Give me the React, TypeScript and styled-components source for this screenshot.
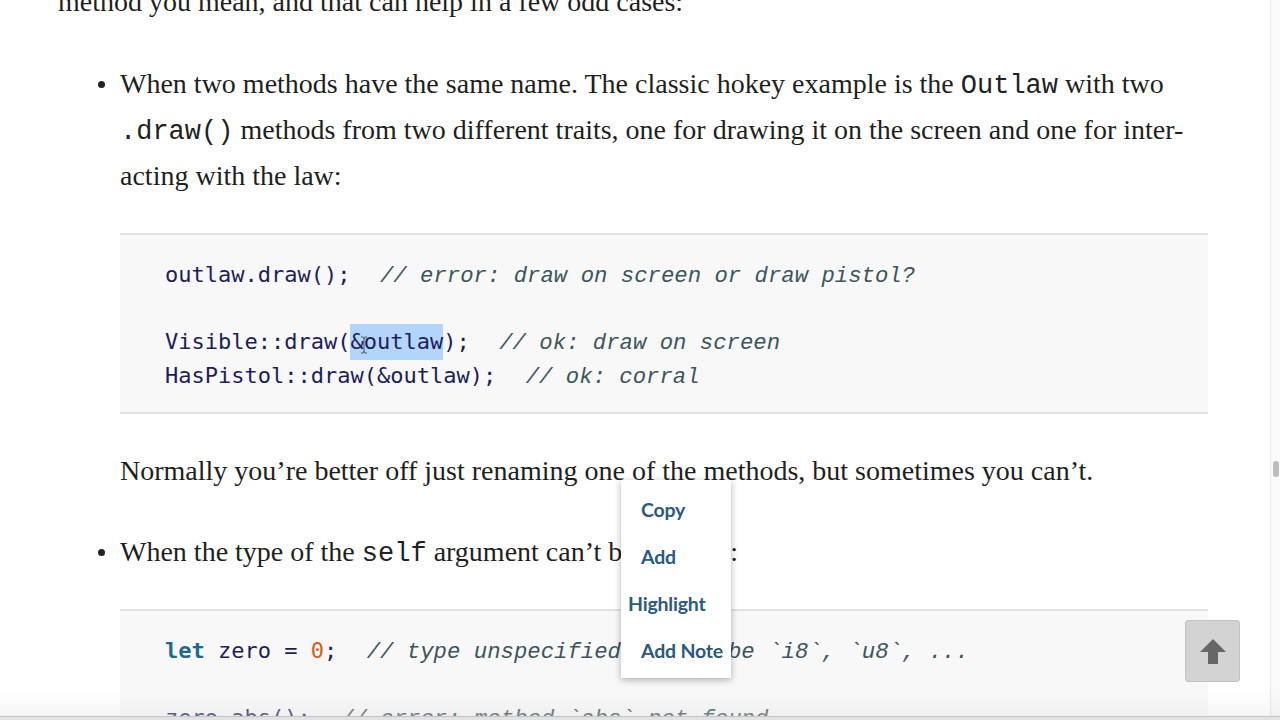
import React from "react";
import styled, { createGlobalStyle } from "styled-components";

const Global = createGlobalStyle`
  html, body { margin: 0; padding: 0; background: #ffffff; overflow: hidden; }
  body { width: 1280px; height: 720px; }
`;

const Page = styled.div`
  position: relative;
  width: 1280px;
  height: 720px;
  overflow: hidden;
  background: #fff;
`;

const Article = styled.div`
  display: flex;
  flex-direction: column;
  gap: 36px;
  width: 1150px;
  padding-left: 58px;
  margin-top: -21px;
  font-family: "Liberation Serif", "Times New Roman", serif;
  font-size: 28px;
  line-height: 46px;
  color: #1f1f1f;
`;

const Para = styled.p`
  margin: 0;
  white-space: nowrap;
`;

const List = styled.ul`
  margin: 0;
  padding: 0;
  list-style: none;
  display: flex;
  flex-direction: column;
  gap: 35px;
`;

const Item = styled.li`
  display: grid;
  grid-template-columns: 62px 1fr;
`;

const BulletCell = styled.div`
  height: 46px;
  display: flex;
  align-items: center;
  justify-content: flex-end;
  padding-right: 15px;
`;

const Dot = styled.span`
  width: 7px;
  height: 7px;
  border-radius: 50%;
  background: #222;
`;

const ItemBody = styled.div`
  display: flex;
  flex-direction: column;
  gap: 34px;
`;

const Code = styled.code`
  font-family: "Liberation Mono", monospace;
  font-size: 27px;
  line-height: 1;
  color: #222;
`;

const CodeBlock = styled.div`
  padding: 23px 45px 20px;
  background: #f8f8f8;
  border-top: 2px solid #e3e3e3;
  border-bottom: 2px solid #e3e3e3;
  display: flex;
  flex-direction: column;
  overflow: hidden;
`;

const CodeLine = styled.div`
  height: 33.5px;
  line-height: 33.5px;
  white-space: pre;
  font-family: "DejaVu Sans Mono", monospace;
  font-size: 22px;
  color: #1d1d5e;
`;

const Comment = styled.span`
  font-family: "Liberation Mono", monospace;
  font-style: italic;
  font-size: 22.3px;
  color: #3c565c;
  padding-left: 3px;
`;

const Keyword = styled.span`
  font-weight: bold;
  color: #1e6a8a;
`;

const Num = styled.span`
  color: #d2601a;
`;

const Selected = styled.span`
  position: relative;
  background: #b4d5fb;
  padding: 5px 0 6px;
`;

const IBeam = styled.svg`
  position: absolute;
  left: 10px;
  top: 12px;
  pointer-events: none;
`;

const Menu = styled.div`
  position: absolute;
  left: 621px;
  top: 480px;
  width: 110px;
  height: 198px;
  box-sizing: border-box;
  background: #fff;
  box-shadow: 0 2px 7px rgba(0, 0, 0, 0.3);
  display: flex;
  flex-direction: column;
  padding-top: 6px;
`;

const MenuItem = styled.div<{ $indent: number }>`
  font-family: "Lato", "Open Sans", sans-serif;
  font-weight: 700;
  font-size: 19.5px;
  line-height: 47px;
  height: 47px;
  color: #2b5a83;
  padding-left: ${(p) => p.$indent}px;
  white-space: nowrap;
  letter-spacing: -0.2px;
`;

const TopButton = styled.div`
  position: absolute;
  left: 1185px;
  top: 620px;
  width: 55px;
  height: 62px;
  box-sizing: border-box;
  background: #d3d3d3;
  border: 1px solid #c2c2c2;
  border-radius: 3px;
  display: flex;
  align-items: center;
  justify-content: center;
`;

const ScrollTrack = styled.div`
  position: absolute;
  right: 0;
  top: 0;
  width: 10px;
  height: 720px;
  border-left: 1px solid #e6e6e6;
  background: #fafafa;
  display: flex;
  justify-content: center;
  padding-top: 461px;
  box-sizing: border-box;
`;

const ScrollThumb = styled.div`
  width: 6px;
  height: 16px;
  border-radius: 3px;
  background: #bdbdbd;
`;

const BottomShade = styled.div`
  position: absolute;
  left: 0;
  bottom: 4px;
  width: 1280px;
  height: 24px;
  background: linear-gradient(to bottom, rgba(230, 230, 230, 0) 0%, rgba(225, 225, 225, 0.35) 100%);
`;

const BottomBar = styled.div`
  position: absolute;
  left: 0;
  bottom: 0;
  width: 1280px;
  height: 4px;
  background: #e2e2e2;
  border-top: 1px solid #c4c4c4;
  box-sizing: border-box;
`;

export default function App() {
  return (
    <Page>
      <Global />
      <Article>
        <Para>method you mean, and that can help in a few odd cases:</Para>
        <List>
          <Item>
            <BulletCell><Dot /></BulletCell>
            <ItemBody>
              <Para>
                When two methods have the same name. The classic hokey example is the <Code>Outlaw</Code> with two
                <br />
                <Code>.draw()</Code> methods from two different traits, one for drawing it on the screen and one for inter-
                <br />
                acting with the law:
              </Para>
              <CodeBlock>
                <CodeLine>outlaw.draw();  <Comment>// error: draw on screen or draw pistol?</Comment></CodeLine>
                <CodeLine />
                <CodeLine>
                  Visible::draw(
                  <Selected>
                    &amp;outlaw
                    <IBeam width="8" height="18" viewBox="0 0 8 18">
                      <path d="M1 1 H3 Q4 1 4 3 V15 Q4 17 3 17 H1 M7 1 H5 Q4 1 4 3 M4 15 Q4 17 5 17 H7" fill="none" stroke="#555" strokeWidth="1" />
                    </IBeam>
                  </Selected>
                  );  <Comment>// ok: draw on screen</Comment>
                </CodeLine>
                <CodeLine>HasPistol::draw(&amp;outlaw);  <Comment>// ok: corral</Comment></CodeLine>
              </CodeBlock>
              <Para>Normally you’re better off just renaming one of the methods, but sometimes you can’t.</Para>
            </ItemBody>
          </Item>
          <Item>
            <BulletCell><Dot /></BulletCell>
            <ItemBody>
              <Para>
                When the type of the <Code>self</Code> argument can’t be inferred:
              </Para>
              <CodeBlock>
                <CodeLine><Keyword>let</Keyword> zero = <Num>0</Num>;  <Comment>// type unspecified; could be `i8`, `u8`, ...</Comment></CodeLine>
                <CodeLine />
                <CodeLine>zero.abs();  <Comment>// error: method `abs` not found</Comment></CodeLine>
              </CodeBlock>
            </ItemBody>
          </Item>
        </List>
      </Article>

      <Menu>
        <MenuItem $indent={20}>Copy</MenuItem>
        <MenuItem $indent={20}>Add</MenuItem>
        <MenuItem $indent={7}>Highlight</MenuItem>
        <MenuItem $indent={20}>Add Note</MenuItem>
      </Menu>

      <TopButton>
        <svg width="28" height="28" viewBox="0 0 28 28">
          <path d="M14 2 L27 15 L19 15 L19 27 L9 27 L9 15 L1 15 Z" fill="#666" />
        </svg>
      </TopButton>

      <ScrollTrack>
        <ScrollThumb />
      </ScrollTrack>
      <BottomShade />
      <BottomBar />
    </Page>
  );
}
